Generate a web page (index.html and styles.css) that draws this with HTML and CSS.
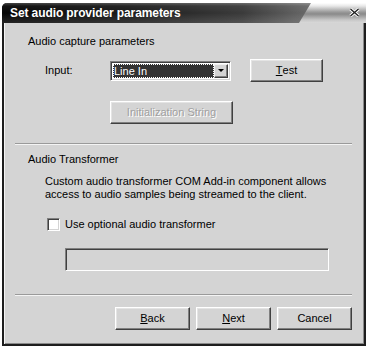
FILE: index.html
```html
<!DOCTYPE html>
<html>
<head>
<meta charset="utf-8">
<link rel="stylesheet" href="styles.css">
</head>
<body>
<div class="window">
  <div class="titlebar">
    <div class="title">Set audio provider parameters</div>
    <div class="title-cap">
      <svg class="close-icon" width="11" height="9" viewBox="0 0 11 9">
        <path d="M1.5 1 L9.5 8 M9.5 1 L1.5 8" stroke="#fff" stroke-width="3.2" fill="none"/>
        <path d="M1.5 1 L9.5 8 M9.5 1 L1.5 8" stroke="#222" stroke-width="1.4" fill="none"/>
      </svg>
    </div>
  </div>
  <div class="content">
    <div class="heading">Audio capture parameters</div>
    <div class="input-row">
      <span class="label">Input:</span>
      <div class="combo">
        <div class="combo-field"><span class="combo-text">Line In</span></div>
        <div class="combo-btn"><span class="arrow"></span></div>
      </div>
      <div class="btn btn-test"><span class="u">T</span>est</div>
    </div>
    <div class="btn btn-init disabled">Initialization String</div>
    <div class="sep sep-1"></div>
    <div class="heading heading-2">Audio Transformer</div>
    <p class="desc">Custom audio transformer COM Add-in component allows<br>access to audio samples being streamed to the client.</p>
    <div class="check-row">
      <span class="checkbox"></span>
      <span class="check-label">Use optional audio transformer</span>
    </div>
    <div class="textfield"></div>
    <div class="sep sep-2"></div>
    <div class="buttons">
      <div class="btn"><span class="u">B</span>ack</div>
      <div class="btn"><span class="u">N</span>ext</div>
      <div class="btn">Cancel</div>
    </div>
  </div>
</div>
</body>
</html>
```

FILE: styles.css
```css
html, body {
  margin: 0;
  padding: 0;
  background: #ffffff;
}
body {
  padding: 3px 0 0 2px;
  font-family: "Liberation Sans", Arial, sans-serif;
  font-size: 11px;
  color: #000;
}
.window {
  box-sizing: border-box;
  width: 364px;
  height: 343px;
  background: #d4d4d4;
  border-left: 2px solid #1e1e1e;
  border-right: 2px solid #1e1e1e;
  border-bottom: 2px solid #1e1e1e;
  border-top-left-radius: 5px;
  box-shadow: inset 1px 0 #f4f4f4, inset -1px -1px #8a8a8a;
  display: flex;
  flex-direction: column;
}
.titlebar {
  height: 20px;
  margin-left: -2px;
  margin-right: -2px;
  border-top-left-radius: 5px;
  background:
    linear-gradient(to bottom, rgba(255,255,255,0.25) 0, rgba(255,255,255,0.05) 3px, rgba(0,0,0,0) 10px, rgba(255,255,255,0.12) 100%),
    linear-gradient(to right, #050505 0, #1a1a1a 120px, #3a3a3a 240px, #6a6a6a 310px);
  display: flex;
  align-items: center;
}
.title {
  flex: 1;
  padding-left: 8px;
  color: #fff;
  font-weight: bold;
  font-size: 12px;
  line-height: 20px;
  letter-spacing: -0.1px;
}
.title-cap {
  width: 67px;
  height: 20px;
  clip-path: polygon(12px 0, 100% 0, 100% 100%, 0 100%);
  background: linear-gradient(to bottom, #ffffff 0, #e8e8e8 15%, #9a9a9a 45%, #8a8a8a 55%, #c8c8c8 85%, #d8d8d8 100%);
  display: flex;
  align-items: center;
  justify-content: flex-end;
  padding-right: 6px;
  box-sizing: border-box;
}
.close-icon {
  display: block;
  margin-top: -2px;
}
.content {
  flex: 1;
  display: flex;
  flex-direction: column;
  align-items: flex-start;
}
.heading {
  margin: 12px 0 0 24px;
  line-height: 13px;
}
.input-row {
  margin-top: 11px;
  display: flex;
  align-items: center;
  height: 23px;
}
.label {
  margin-left: 41px;
  width: 65px;
  line-height: 13px;
}
.combo {
  box-sizing: border-box;
  width: 121px;
  height: 20px;
  border: 1px solid;
  border-color: #808080 #ffffff #ffffff #808080;
  box-shadow: inset 1px 1px #404040, inset -1px -1px #d4d4d4;
  padding: 2px;
  display: flex;
  background: #ffffff;
}
.combo-field {
  flex: 1;
  background: #333333;
  border: 1px dotted #ffffff;
  display: flex;
  align-items: center;
}
.combo-text {
  color: #fff;
  line-height: 12px;
  padding-left: 0;
}
.combo-btn {
  box-sizing: border-box;
  width: 14px;
  background: #d4d4d4;
  border: 1px solid;
  border-color: #f0f0f0 #404040 #404040 #f0f0f0;
  box-shadow: inset -1px -1px #808080;
  display: flex;
  align-items: center;
  justify-content: center;
}
.arrow {
  width: 0;
  height: 0;
  border-left: 3px solid transparent;
  border-right: 3px solid transparent;
  border-top: 3px solid #000;
}
.btn {
  box-sizing: border-box;
  width: 75px;
  height: 23px;
  border: 1px solid;
  border-color: #ffffff #404040 #404040 #ffffff;
  box-shadow: inset -1px -1px #808080, inset 1px 1px #e4e4e4;
  background: #d4d4d4;
  display: flex;
  align-items: center;
  justify-content: center;
  line-height: 13px;
}
.u {
  text-decoration: underline;
}
.btn-test {
  margin-left: 19px;
  width: 73px;
}
.btn-init {
  margin: 19px 0 0 106px;
  width: 123px;
}
.disabled {
  color: #a0a0a0;
  text-shadow: 1px 1px #ffffff;
}
.sep {
  align-self: stretch;
  height: 0;
  border-top: 1px solid #9a9a9a;
  border-bottom: 1px solid #f4f4f4;
  margin-left: 11px;
  margin-right: 12px;
}
.sep-1 {
  margin-top: 19px;
}
.heading-2 {
  margin-top: 8px;
}
.desc {
  margin: 9px 0 0 41px;
  line-height: 13px;
}
.check-row {
  margin-top: 17px;
  margin-left: 43px;
  display: flex;
  align-items: center;
  height: 13px;
}
.checkbox {
  box-sizing: border-box;
  width: 13px;
  height: 13px;
  background: #fff;
  border: 1px solid;
  border-color: #808080 #ffffff #ffffff #808080;
  box-shadow: inset 1px 1px #404040, inset -1px -1px #d4d4d4;
}
.check-label {
  margin-left: 5px;
  line-height: 13px;
}
.textfield {
  box-sizing: border-box;
  margin: 17px 0 0 61px;
  width: 264px;
  height: 23px;
  border: 1px solid;
  border-color: #808080 #ffffff #ffffff #808080;
  box-shadow: inset 1px 1px #404040, inset -1px -1px #d4d4d4;
  background: #d4d4d4;
}
.sep-2 {
  margin-top: 23px;
}
.buttons {
  align-self: stretch;
  margin-top: 11px;
  padding-right: 12px;
  display: flex;
  justify-content: flex-end;
  gap: 6px;
}
```
